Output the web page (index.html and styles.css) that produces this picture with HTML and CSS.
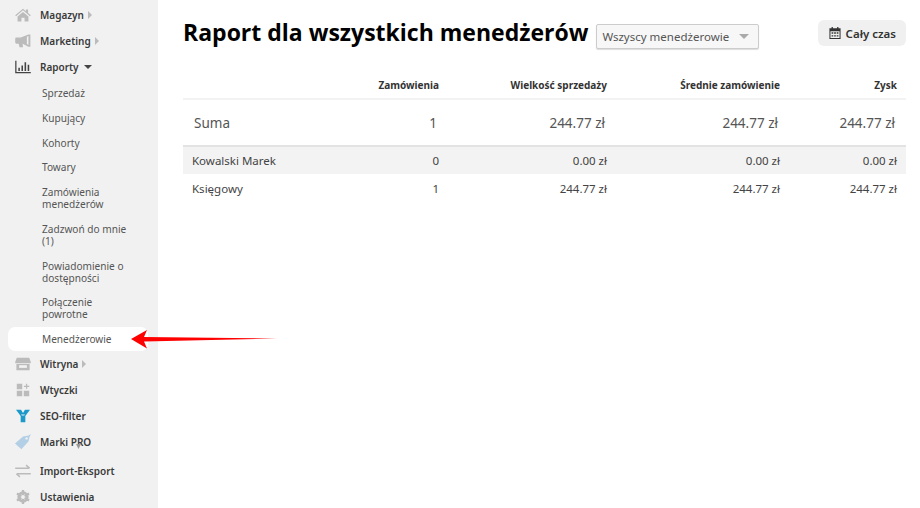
FILE: index.html
```html
<!DOCTYPE html>
<html lang="pl">
<head>
<meta charset="utf-8">
<title>Raport</title>
<link rel="stylesheet" href="styles.css">
</head>
<body>
<div class="app">
  <nav class="side">
    <div class="item"><svg class="ic" viewBox="0 0 20 18"><path fill="#bbb" d="M10 1 0 9.200l1 1.300L10 3l9 7.500 1-1.300-3.500-2.900V2h-2.700v2.100zM3 11v6.500h5v-5h4v5h5V11l-7-6z"/></svg><span>Magazyn</span><i class="tr"></i></div>
    <div class="item"><svg class="ic" viewBox="0 0 20 18"><path fill="#bbb" d="M0 6c0-1 .8-1.500 1.700-1.500H7L17 .5h2.500v16H17L9.500 12.500 10 17H5.500L4.500 12.500H1.700C.8 12.500 0 12 0 11z"/><path fill="#f1f1f1" d="M15 3.500v9.500l2 1V2.600z"/></svg><span>Marketing</span><i class="tr"></i></div>
    <div class="item cur"><svg class="ic" viewBox="0 0 20 18"><path fill="#444" d="M0 1h1.600v14.500H20V17H0zM4 10h2v4H4zM8 7h2v7H8zM12 3h2v11h-2zM16 6h2v8h-2z"/></svg><span>Raporty</span><i class="dn"></i></div>
    <ul class="sub">
      <li>Sprzedaż</li>
      <li>Kupujący</li>
      <li>Kohorty</li>
      <li>Towary</li>
      <li class="two">Zamówienia menedżerów</li>
      <li class="two">Zadzwoń do mnie (1)</li>
      <li class="two">Powiadomienie o dostępności</li>
      <li class="two">Połączenie powrotne</li>
      <li class="on">Menedżerowie</li>
    </ul>
    <div class="item"><svg class="ic" viewBox="0 0 20 18"><path fill="#bbb" d="M2 1h16l2 5.500V8H0V6.500zM1.500 9h17v8h-17z"/><path fill="#f1f1f1" d="M5 10.500h10v3.500H5z"/></svg><span>Witryna</span><i class="tr"></i></div>
    <div class="item"><svg class="ic" viewBox="0 0 20 18"><path fill="#bbb" d="M2 1h7v7H2zM2 10h7v7H2zM11 10h7v7h-7zM13.800 1h1.600v2.500h2.600v1.500h-2.600v2.500h-1.600V5h-2.600V3.500h2.600z"/></svg><span>Wtyczki</span></div>
    <div class="item"><svg class="ic" viewBox="0 0 20 18"><path fill="#1b9ac9" d="M1 1h6.500L10 5l2.500-4H19l-6 8v8H7V9z"/><path fill="#f1f1f1" d="M7.500 7h5l-1 1.200h-3z"/></svg><span>SEO-filter</span></div>
    <div class="item pro"><svg class="ic big" viewBox="0 0 20 20"><path fill="#b3cfe6" d="M0 12 10 3l7-1 3-2-2 4-1 5-9 10z"/><circle cx="14.500" cy="5.500" r="1.500" fill="#f1f1f1"/></svg><span>Marki PRO</span><i class="mark"></i></div>
    <div class="item imp"><svg class="ic" viewBox="0 0 20 18"><path fill="none" stroke="#bbb" stroke-width="2" d="M0 5.500h18M14 1.500l4.500 4M20 12.500H2M6 16.500l-4.500-4"/></svg><span>Import-Eksport</span></div>
    <div class="item"><svg class="ic" viewBox="0 0 20 18"><circle cx="10" cy="9" r="5.500" fill="none" stroke="#bbb" stroke-width="3.500"/><path stroke="#bbb" stroke-width="3" d="M10 0v18M2.200 4.500l15.600 9M2.200 13.500l15.600-9"/><circle cx="10" cy="9" r="2.500" fill="#f1f1f1"/></svg><span>Ustawienia</span></div>
  </nav>
  <main class="main">
    <header class="head">
      <h1>Raport dla wszystkich menedżerów</h1>
      <div class="sel">Wszyscy menedżerowie<i class="sdn"></i></div>
      <div class="btn"><svg class="cal" viewBox="0 0 14 14"><path fill="#333" fill-rule="evenodd" d="M3 0h1.500v1.500h5V0H11v1.500h2.500V14H.5V1.500H3zM1.700 5v7.800h10.600V5zM3 6.200h2v1.700H3zM6 6.200h2v1.700H6zM9 6.200h2v1.700H9zM3 9.500h2v1.700H3zM6 9.500h2v1.700H6zM9 9.500h2v1.700H9z"/></svg>Cały czas</div>
    </header>
    <table class="tbl">
      <thead>
        <tr><th></th><th>Zamówienia</th><th>Wielkość sprzedaży</th><th>Średnie zamówienie</th><th>Zysk</th></tr>
      </thead>
      <tbody>
        <tr class="sum"><td>Suma</td><td>1</td><td>244.77 zł</td><td>244.77 zł</td><td>244.77 zł</td></tr>
        <tr class="alt"><td>Kowalski Marek</td><td>0</td><td>0.00 zł</td><td>0.00 zł</td><td>0.00 zł</td></tr>
        <tr><td>Księgowy</td><td>1</td><td>244.77 zł</td><td>244.77 zł</td><td>244.77 zł</td></tr>
      </tbody>
    </table>
  </main>
</div>
<svg class="arrow" viewBox="0 0 146 20"><path fill="#f00" d="M0 10 16 1l-3 7 133 1.500-133 3 3 7z"/></svg>
</body>
</html>
```
FILE: styles.css
```css
* { box-sizing: border-box; }
html, body { margin: 0; height: 100%; overflow: hidden; background: #fff; }
body { font-family: "Noto Sans", "Open Sans", sans-serif; color: #333; position: relative; }
.app { display: flex; height: 508px; }
.side { width: 158px; flex: none; background: #f1f1f1; padding-top: 2px; }
.item { height: 26px; display: flex; align-items: center; padding-left: 15px; font-size: 10px; font-weight: 600; color: #3a3a3a; position: relative; }
.ic { width: 16px; height: 14px; margin-right: 9px; flex: none; }
.ic.big { height: 16px; }
.imp { margin-top: 3px; }
.tr { width: 0; height: 0; margin-left: 4px; border-left: 4px solid #bbb; border-top: 4px solid transparent; border-bottom: 4px solid transparent; }
.dn { width: 0; height: 0; margin-left: 5px; border-top: 4px solid #444; border-left: 4px solid transparent; border-right: 4px solid transparent; }
.mark { position: absolute; left: 76px; top: 15px; width: 5px; height: 5px; background: #999; clip-path: polygon(0 0, 100% 0, 50% 100%); }
.sub { list-style: none; margin: 0; padding: 1px 0 0 8px; font-size: 10.100px; color: #555; }
.sub li { padding: 6px 18px 6px 34px; line-height: 12px; height: 24.750px; width: 140px; }
.sub li.two { height: 36.750px; }
.sub li.on { background: #fff; border-radius: 7px; height: 24px; }
.main { flex: 1; padding: 0 14px 0 25px; min-width: 0; }
.head { display: flex; align-items: flex-start; height: 71px; }
h1 { margin: 16px 8px 0 0; font: 700 23px/32px "Open Sans", sans-serif; color: #000; white-space: nowrap; }
.sel { margin-top: 24px; width: 163px; height: 25px; border: 1px solid #ccc; border-radius: 2px; background: #f7f7f7; font-size: 11.500px; line-height: 23px; padding-left: 5px; color: #555; position: relative; box-shadow: 0 1px 1px #ddd; }
.sdn { position: absolute; right: 9px; top: 9px; border-top: 5px solid #aaa; border-left: 5px solid transparent; border-right: 5px solid transparent; }
.btn { margin: 20px 0 0 auto; height: 26px; padding: 0 10px 0 11px; background: #f0f0f0; border-radius: 6px; display: flex; align-items: center; font-size: 11.500px; font-weight: 600; color: #333; white-space: nowrap; }
.cal { width: 12px; height: 12px; margin-right: 5px; }
.tbl { width: 100%; border-collapse: collapse; table-layout: fixed; }
.tbl th { height: 28px; font-size: 10px; font-weight: 700; text-align: right; color: #333; padding: 0 9px 0 0; border-bottom: 2px solid #f3f3f3; }
.tbl th:nth-child(1) { width: 168px; }
.tbl th:nth-child(2) { width: 97px; }
.tbl th:nth-child(3) { width: 168px; }
.tbl th:nth-child(4) { width: 173px; }
.tbl td { text-align: right; padding: 0 9px 0 0; font-size: 11.500px; color: #444; height: 29px; }
.tbl td:first-child { text-align: left; padding-left: 9px; }
.sum td { height: 47px; font-size: 13.500px; color: #555; border-bottom: 2px solid #e3e3e3; padding: 1px 11px 0 0; }
.sum td:first-child { padding-left: 11px; }
.alt td { background: #f3f3f3; height: 28px; }
.arrow { position: absolute; left: 131px; top: 329px; width: 146px; height: 20px; }
```
